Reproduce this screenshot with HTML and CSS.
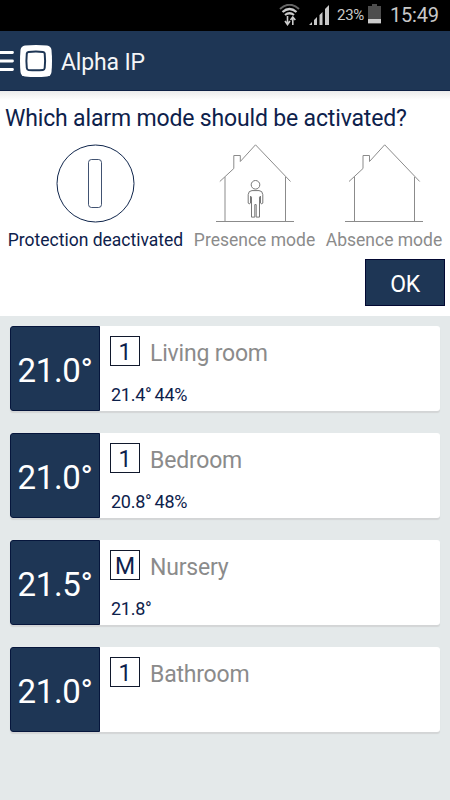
FILE: index.html
```html
<!DOCTYPE html>
<html lang="en">
<head>
<meta charset="utf-8">
<title>Alpha IP</title>
<link rel="stylesheet" href="styles.css">
</head>
<body>
<div class="status">
  <svg class="wifi" width="22" height="24" viewBox="0 0 22 24" fill="none">
    <path d="M1 5Q10.500-3.500 20 5" stroke="#666" stroke-width="2"/>
    <path d="M3.500 8Q10.500 2 17.500 8M6 11Q10.500 7.500 15 11" stroke="#ccc" stroke-width="2.200"/>
    <path d="M8.500 12v8.500M6 17l2.500 3.500L11 17M13.800 21v-8.500M11.500 16l2.300-3 2.500 3" stroke="#ccc" stroke-width="1.600"/>
  </svg>
  <svg class="signal" width="22" height="22" viewBox="0 0 22 22" fill="#c8c8c8">
    <path d="M0 21l3-3v3zM5 21v-5l3-3V21zM10.500 21V11L13.500 8v13zM16 21V5l4-4v20z"/>
  </svg>
  <span class="percent">23%</span>
  <svg class="battery" width="13" height="20" viewBox="0 0 13 20">
    <path d="M0 2h4V0h5v2h4v18H0z" fill="#4d4d4d"/><path d="M0 15h13v4H0z" fill="#ccc"/>
  </svg>
  <span class="clock">15:49</span>
</div>
<header class="bar">
  <svg class="menu" width="14" height="22" viewBox="0 0 14 22"><path d="M0 2.500h12.500M0 11h12.500M0 19.500h12.500" stroke="#fff" stroke-width="2.800" stroke-linecap="round"/></svg>
  <svg class="logo" width="32" height="32" viewBox="0 0 32 32">
    <path d="M5 .5Q16-.5 27 .5 31 1 31.500 5 32.500 16 31.500 27 31 31 27 31.500 16 32.500 5 31.500 1 31 .5 27-.5 16 .5 5 1 1 5 .5Z" fill="#fff"/>
    <path d="M8.500 7Q16 6 23 7 24.500 7.200 24.700 8.500 25.500 16 24.700 23 24.500 24.700 23 24.900 16 25.700 8.500 24.900 7 24.700 6.800 23 6 16 6.800 8.500 7 7.200 8.500 7Z" fill="#fff" stroke="#1e3655" stroke-width="2"/>
  </svg>
  <h1 class="title">Alpha IP</h1>
</header>
<section class="alarm">
  <h2 class="question">Which alarm mode should be activated?</h2>
  <div class="modes">
    <div class="mode mode-off">
      <svg width="80" height="80" viewBox="0 0 80 80" fill="none" stroke="#10264c"><circle cx="39.500" cy="39.500" r="38.500" stroke-width="1"/><rect x="32.500" y="15.500" width="13" height="48" rx="3" stroke-width=".8"/></svg>
      <span class="label label-off">Protection deactivated</span>
    </div>
    <div class="mode mode-presence">
      <svg width="80" height="80" viewBox="0 0 80 80" fill="none" stroke="#8b8b8b" stroke-width="1">
        <path d="M4.800 37.500 18.800 24.500V11.500h6.500v6L40.500 .8 75.500 37.500M10 33v44.500M70.500 33v44.500M1 77.500h78"/>
        <g stroke="#777" stroke-width="1" transform="translate(-.5 -.9)"><circle cx="41" cy="41.700" r="4.300"/><path d="M37.500 47.500h7q3.500 0 3.800 4V60q-.8 1.500-2.300 0v-7l-1 1v20h-3.300V61.500h-1.400V74H37V54l-1-1v7q-1.500 1.500-2.300 0v-8.500q.3-4 3.800-4Z"/></g>
      </svg>
      <span class="label">Presence mode</span>
    </div>
    <div class="mode mode-absence">
      <svg width="80" height="80" viewBox="0 0 80 80" fill="none" stroke="#8b8b8b" stroke-width="1"><path d="M4 37.500 18 24.500V11.500h6.500v6L39.700 .8 74.700 37.500M9.500 33v44.500M69.500 33v44.500M0 77.500h78"/></svg>
      <span class="label label-absence">Absence mode</span>
    </div>
  </div>
  <button class="ok">OK</button>
</section>
<main class="rooms">
  <article class="room"><div class="target">21.0°</div><div class="info"><div class="heading"><span class="profile">1</span><span class="name">Living room</span></div><div class="actual"><span>21.4°</span><span>44%</span></div></div></article>
  <article class="room"><div class="target">21.0°</div><div class="info"><div class="heading"><span class="profile">1</span><span class="name">Bedroom</span></div><div class="actual"><span>20.8°</span><span>48%</span></div></div></article>
  <article class="room"><div class="target">21.5°</div><div class="info"><div class="heading"><span class="profile">M</span><span class="name">Nursery</span></div><div class="actual"><span>21.8°</span></div></div></article>
  <article class="room"><div class="target">21.0°</div><div class="info"><div class="heading"><span class="profile">1</span><span class="name">Bathroom</span></div></div></article>
</main>
</body>
</html>
```
FILE: styles.css
```css
* { box-sizing: border-box; }
body {
  margin: 0;
  height: 800px;
  overflow: hidden;
  display: flex;
  flex-direction: column;
  background: #e4e9ea;
  font-family: Roboto, sans-serif;
  color: #0d214b;
  white-space: nowrap;
}
svg { display: block; flex: none; }
.status {
  height: 31px;
  flex: none;
  display: flex;
  padding-left: 279px;
  background: #000;
  color: #c8c8c8;
}
.wifi { margin-top: 4px; }
.signal { margin: 4px 0 0 8px; }
.percent { width: 30px; margin-left: 6px; font-size: 15px; letter-spacing: -.3px; line-height: 30px; }
.battery { margin: 4px 0 0 1px; }
.clock { margin-left: 9px; font-size: 20px; letter-spacing: -.2px; line-height: 31px; }
.bar {
  height: 60px;
  flex: none;
  display: flex;
  align-items: center;
  background: #1e3655;
  border-bottom: 1px solid #0e2145;
  color: #f4f5f7;
}
.logo { margin-left: 6px; }
.title { margin: 4px 0 0 9px; font-size: 23px; letter-spacing: -.15px; font-weight: 400; line-height: 30px; }
.alarm {
  height: 225px;
  flex: none;
  display: flex;
  flex-direction: column;
  background: linear-gradient(#ebebeb, #fff 9px);
}
.question { margin: 13px 0 0 5px; font-size: 23px; letter-spacing: -.16px; font-weight: 400; line-height: 30px; }
.modes { display: flex; height: 118px; margin-top: 10px; padding-left: 7px; }
.mode { display: flex; flex-direction: column; align-items: center; }
.mode-off { width: 177px; }
.mode-presence { width: 121px; margin-left: 10px; }
.mode-absence { width: 117px; margin-left: 11px; }
.label { margin-top: 6px; font-size: 17.5px; line-height: 20px; color: #8b8b8b; }
.label-off { color: #0d214b; }
.label-absence { margin-left: -1px; }
.ok {
  width: 80px;
  height: 47px;
  align-self: flex-end;
  margin: -3px 5px 0 0;
  padding: 4px 0 0;
  border: 1px solid #020832;
  background: #1e3655;
  color: #fff;
  font: 23px/30px Roboto, sans-serif;
  letter-spacing: -.4px;
}
.rooms { display: flex; flex-direction: column; gap: 22px; padding: 10px; }
.room {
  display: flex;
  height: 85px;
  background: #fff;
  border-radius: 3px;
  box-shadow: 0 2px 1px #d3d5d6;
}
.target {
  width: 90px;
  border: 1px solid #06163c;
  border-radius: 3px 0 0 3px;
  background: #1e3655;
  color: #fff;
  font-size: 33px;
  letter-spacing: -.3px;
  line-height: 87px;
  text-align: center;
}
.info { padding: 10px; }
.heading { display: flex; height: 34px; }
.profile {
  width: 30px;
  height: 30px;
  border: 1px solid #10182c;
  font-size: 23px;
  line-height: 31px;
  text-align: center;
}
.name { margin-left: 10px; font-size: 23px; letter-spacing: -.2px; line-height: 36px; color: #8b8b8b; }
.actual { display: flex; gap: 3px; margin: 15px 0 0 1px; font-size: 18px; letter-spacing: -.25px; line-height: 20px; }
```
